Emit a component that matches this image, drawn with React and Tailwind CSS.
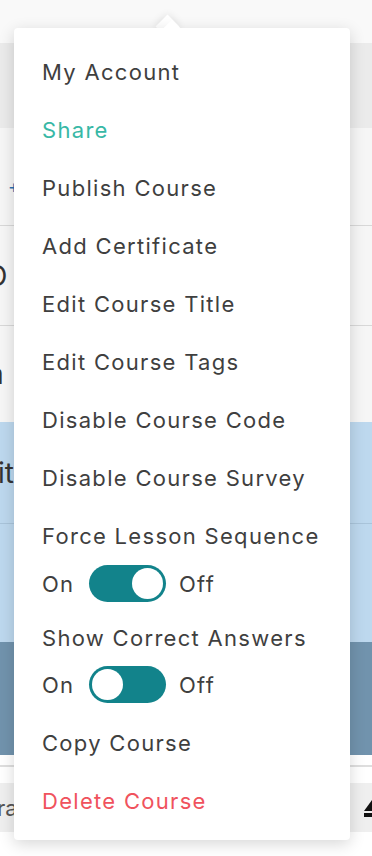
import React from "react";

const font = { fontFamily: "Inter, 'Open Sans', Arial, sans-serif" };

const Toggle = ({ on }) => (
  <div className="w-[77px] h-[37px] rounded-full bg-[#12838b] p-[3px] flex items-center">
    <div className={`w-[31px] h-[31px] rounded-full bg-white ${on ? "ml-auto" : ""}`} />
  </div>
);

const Item = ({ children, color = "text-[#3f3f3f]", h = "h-[58px]" }) => (
  <div className={`${h} flex items-center pl-[28px] ${color}`}>{children}</div>
);

const ToggleRow = ({ on, pb }) => (
  <div className={`flex items-center pl-[28px] text-[#3f3f3f] ${pb}`}>
    <span className="w-[47px]">On</span>
    <Toggle on={on} />
    <span className="ml-[13px]">Off</span>
  </div>
);

export default function App() {
  return (
    <div className="relative w-[372px] h-[856px] overflow-hidden bg-white" style={font}>
      {/* page behind the menu */}
      <div className="flex flex-col">
        <div className="h-[43px] bg-[#f9f9f9]" />
        <div className="h-[85px] bg-[#ebebeb]" />
        <div className="h-[97px] bg-[#f6f6f6] flex items-center">
          <span className="ml-[8px] mt-[20px] text-[#2a6fb0] text-[18px] leading-none">+</span>
        </div>
        <div className="h-[100px] bg-[#f6f6f6] border-t border-[#d8d8d8] flex items-center">
          <span className="-ml-[14px] text-[28px] text-[#333] leading-none">O</span>
        </div>
        <div className="h-[97px] bg-[#f6f6f6] border-t border-[#d8d8d8] flex items-center">
          <span className="-ml-[12px] text-[28px] text-[#333] leading-none">a</span>
        </div>
        <div className="h-[101px] bg-[#bdd8ee] flex items-center">
          <span className="-ml-[2px] text-[28px] text-[#333] leading-none">it</span>
        </div>
        <div className="h-[119px] bg-[#bdd8ee] border-t border-[#a9c4da]" />
        <div className="h-[113px] bg-[#7193ad]" />
        <div className="h-[10px] bg-white" />
        <div className="h-[18px] bg-white border-t-2 border-[#dedede]" />
        <div className="h-[49px] bg-[#efefef] flex items-center justify-between">
          <span className="-ml-[32px] text-[22px] text-[#555] leading-none">Cura</span>
          <svg width="20" height="20" viewBox="0 0 20 20" className="-mr-[10px]">
            <path d="M10 2 L18 13 L2 13 Z" fill="#111" />
            <rect x="2" y="15" width="16" height="4" fill="#111" />
          </svg>
        </div>
        <div className="flex-1 bg-[#f6f6f6]" />
      </div>

      {/* dropdown menu */}
      <div className="absolute left-[159px] top-[18px] w-[17px] h-[17px] rotate-45 bg-white shadow-[0_0_8px_rgba(0,0,0,0.12)]" />
      <div className="absolute left-[14px] top-[28px] w-[336px] h-[812px] bg-white rounded-[4px] shadow-[0_4px_16px_rgba(0,0,0,0.16)] pt-[15px] text-[22px] tracking-[1.3px] leading-none">
        <Item>My Account</Item>
        <Item color="text-[#38b8a6]">Share</Item>
        <Item>Publish Course</Item>
        <Item>Add Certificate</Item>
        <Item>Edit Course Title</Item>
        <Item>Edit Course Tags</Item>
        <Item>Disable Course Code</Item>
        <Item>Disable Course Survey</Item>
        <Item>Force Lesson Sequence</Item>
        <ToggleRow on pb="pb-[8px]" />
        <Item h="h-[56px]">Show Correct Answers</Item>
        <ToggleRow on={false} pb="pb-[11px]" />
        <Item>Copy Course</Item>
        <Item color="text-[#f0525d]">Delete Course</Item>
      </div>
      <div className="absolute left-[164px] top-[23px] w-[16px] h-[16px] rotate-45 bg-white" />
    </div>
  );
}
